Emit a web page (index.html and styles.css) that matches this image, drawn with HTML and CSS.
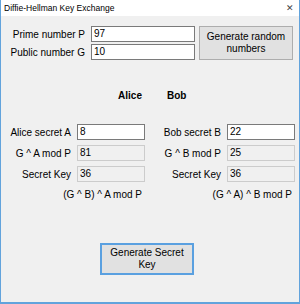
FILE: index.html
```html
<!DOCTYPE html>
<html>
<head>
<meta charset="utf-8">
<link rel="stylesheet" href="styles.css">
</head>
<body>
<div class="window">
  <div class="titlebar">
    <span class="title">Diffie-Hellman Key Exchange</span>
    <span class="close">✕</span>
  </div>
  <div class="client">
    <div class="top">
      <div class="params">
        <label class="lbl">Prime number P</label>
        <div class="box">97</div>
        <label class="lbl">Public number G</label>
        <div class="box">10</div>
      </div>
      <button class="btn random">Generate random numbers</button>
    </div>
    <div class="parties">
      <div class="party alice">
        <div class="head head-right">Alice</div>
        <div class="fields">
          <label class="lbl">Alice secret A</label>
          <div class="box">8</div>
          <label class="lbl">G ^ A mod P</label>
          <div class="box ro">81</div>
          <label class="lbl">Secret Key</label>
          <div class="box ro">36</div>
        </div>
        <div class="formula">(G ^ B) ^ A mod P</div>
      </div>
      <div class="party bob">
        <div class="head head-left">Bob</div>
        <div class="fields">
          <label class="lbl">Bob secret B</label>
          <div class="box">22</div>
          <label class="lbl">G ^ B mod P</label>
          <div class="box ro">25</div>
          <label class="lbl">Secret Key</label>
          <div class="box ro">36</div>
        </div>
        <div class="formula">(G ^ A) ^ B mod P</div>
      </div>
    </div>
    <div class="bottom">
      <button class="btn secret">Generate Secret Key</button>
    </div>
  </div>
</div>
</body>
</html>
```

FILE: styles.css
```css
html, body {
  margin: 0;
  padding: 0;
  background: #f0f0f0;
}
body {
  font-family: "Liberation Sans", Arial, sans-serif;
  font-size: 10px;
  color: #000;
}
.window {
  width: 300px;
  height: 304px;
  box-sizing: border-box;
  border: 1px solid #62a3dc;
  border-top: none;
  border-bottom-width: 2px;
  background: #f0f0f0;
  display: flex;
  flex-direction: column;
}
.titlebar {
  height: 16px;
  background: #ffffff;
  display: flex;
  align-items: center;
  justify-content: space-between;
  padding: 0 5px 0 3px;
  flex: none;
}
.title {
  font-size: 8.5px;
  color: #000;
}
.close {
  font-size: 9px;
  color: #444;
}
.client {
  flex: 1;
  display: flex;
  flex-direction: column;
}
.top {
  display: flex;
  padding-top: 10px;
  gap: 4px;
  align-items: flex-start;
}
.params {
  display: grid;
  grid-template-columns: 84px 104px;
  column-gap: 6px;
  row-gap: 2px;
  align-items: center;
}
.lbl {
  text-align: right;
  white-space: nowrap;
}
.box {
  height: 16px;
  box-sizing: border-box;
  border: 1px solid #7a7a7a;
  background: #ffffff;
  padding: 0 2px;
  line-height: 14px;
}
.box.ro {
  background: #f0f0f0;
  border-color: #cccccc;
}
.btn {
  font-family: inherit;
  font-size: 10px;
  color: #000;
  background: #e1e1e1;
  border: 1px solid #adadad;
  padding: 0 6px;
  line-height: 12px;
  box-sizing: border-box;
}
.random {
  width: 94px;
  height: 34px;
}
.parties {
  display: grid;
  grid-template-columns: 144px 144px;
  column-gap: 6px;
  padding-top: 29px;
}
.head {
  font-weight: bold;
  height: 14px;
  line-height: 14px;
}
.head-right {
  text-align: right;
  padding-right: 3px;
}
.head-left {
  padding-left: 16px;
}
.fields {
  display: grid;
  grid-template-columns: 70px 68px;
  column-gap: 6px;
  row-gap: 5px;
  align-items: center;
  margin-top: 21px;
}
.formula {
  text-align: right;
  padding-right: 3px;
  margin-top: 6px;
  line-height: 14px;
}
.bottom {
  padding-top: 41px;
  padding-left: 99px;
}
.secret {
  width: 94px;
  height: 32px;
  border: 2px solid #5aa0e0;
  padding: 0 2px;
}
```
